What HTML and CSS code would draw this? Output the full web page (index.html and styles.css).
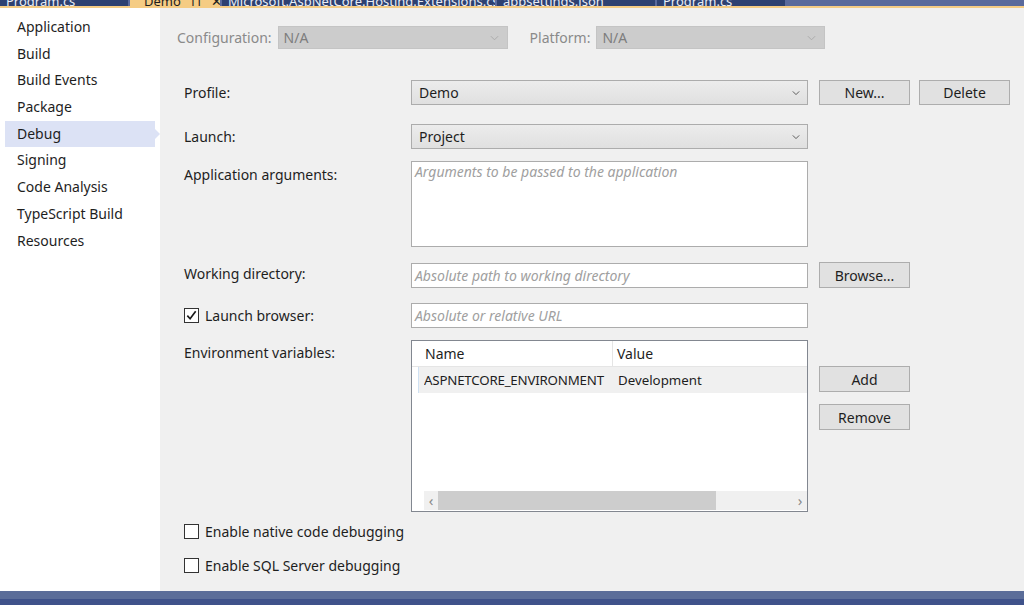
FILE: index.html
```html
<!DOCTYPE html>
<html>
<head>
<meta charset="utf-8">
<link rel="stylesheet" href="styles.css">
</head>
<body>
<div class="tabstrip">
  <div class="tab t1"><span>Program.cs</span></div>
  <div class="tab active t2"><span>Demo</span><span class="pin">⊓</span><span class="x">✕</span></div>
  <div class="tab t3"><span>Microsoft.AspNetCore.Hosting.Extensions.cs</span></div>
  <div class="tab t4"><span>appsettings.json</span></div>
  <div class="tab t5"><span>Program.cs</span></div>
  <div class="tabfill"></div>
</div>
<div class="accent"></div>
<div class="window">
  <nav class="nav">
    <div class="nav-item">Application</div>
    <div class="nav-item">Build</div>
    <div class="nav-item">Build Events</div>
    <div class="nav-item">Package</div>
    <div class="nav-item selected">Debug</div>
    <div class="nav-item">Signing</div>
    <div class="nav-item">Code Analysis</div>
    <div class="nav-item">TypeScript Build</div>
    <div class="nav-item">Resources</div>
  </nav>
  <main class="main">
    <div class="configbar">
      <span class="cfg-label">Configuration:</span>
      <div class="cfg-select cfg-wide"><span>N/A</span><svg class="chev" viewBox="0 0 10 6" width="9" height="6"><path d="M1 1l4 4 4-4" fill="none" stroke="#a8a8a8" stroke-width="1"/></svg></div>
      <span class="cfg-label cfg-plat">Platform:</span>
      <div class="cfg-select cfg-narrow"><span>N/A</span><svg class="chev" viewBox="0 0 10 6" width="9" height="6"><path d="M1 1l4 4 4-4" fill="none" stroke="#a8a8a8" stroke-width="1"/></svg></div>
    </div>
    <div class="form">
      <div class="row r-profile">
        <label class="lbl">Profile:</label>
        <div class="select"><span>Demo</span><svg class="chev" viewBox="0 0 10 6" width="8" height="6"><path d="M1 1l4 4 4-4" fill="none" stroke="#555" stroke-width="1.2"/></svg></div>
        <button class="btn">New...</button>
        <button class="btn">Delete</button>
      </div>
      <div class="row r-launch">
        <label class="lbl">Launch:</label>
        <div class="select"><span>Project</span><svg class="chev" viewBox="0 0 10 6" width="8" height="6"><path d="M1 1l4 4 4-4" fill="none" stroke="#555" stroke-width="1.2"/></svg></div>
      </div>
      <div class="row r-args">
        <label class="lbl lbl-top">Application arguments:</label>
        <div class="textarea ph">Arguments to be passed to the application</div>
      </div>
      <div class="row r-work">
        <label class="lbl">Working directory:</label>
        <div class="input ph">Absolute path to working directory</div>
        <button class="btn btn-browse">Browse...</button>
      </div>
      <div class="row r-browser">
        <label class="lbl chk-lbl"><span class="chk checked"><svg viewBox="0 0 14 14" width="13" height="13"><path d="M2.5 7.2l3 3.3 6-8" fill="none" stroke="#1a1a1a" stroke-width="1.8"/></svg></span>Launch browser:</label>
        <div class="input ph">Absolute or relative URL</div>
      </div>
      <div class="row r-env">
        <label class="lbl lbl-top">Environment variables:</label>
        <div class="grid">
          <div class="grid-head">
            <div class="gh-stub"></div>
            <div class="gh-name">Name</div>
            <div class="gh-value">Value</div>
          </div>
          <div class="grid-row">
            <div class="gr-stub"></div>
            <div class="gr-name">ASPNETCORE_ENVIRONMENT</div>
            <div class="gr-value">Development</div>
          </div>
          <div class="grid-body"></div>
          <div class="hscroll">
            <span class="arr">‹</span>
            <div class="track"><div class="thumb"></div></div>
            <span class="arr">›</span>
          </div>
        </div>
        <div class="env-btns">
          <button class="btn">Add</button>
          <button class="btn">Remove</button>
        </div>
      </div>
      <div class="checks">
        <label class="check-line"><span class="chk"></span>Enable native code debugging</label>
        <label class="check-line"><span class="chk"></span>Enable SQL Server debugging</label>
      </div>
    </div>
  </main>
</div>
<div class="statusbar"></div>
</body>
</html>
```
FILE: styles.css
```css
* { box-sizing: border-box; }
html, body { margin: 0; padding: 0; }
body {
  width: 1024px;
  height: 605px;
  overflow: hidden;
  font-family: "Noto Sans", "Open Sans", sans-serif;
  font-size: 14px;
  color: #1e1e1e;
  background: #f0f0f0;
  display: flex;
  flex-direction: column;
}
.tabstrip {
  height: 6px;
  display: flex;
  background: #5a6a9c;
  overflow: hidden;
}
.tab {
  height: 6px;
  background: #2e4171;
  color: #e8ecf5;
  font-size: 13px;
  line-height: 6px;
  margin-right: 2px;
  padding-left: 6px;
  white-space: nowrap;
  overflow: hidden;
  display: flex;
  align-items: flex-end;
}
.tab span { position: relative; top: -2px; }
.t1 { width: 128px; }
.t2 { width: 90px; background: #f5cc84; color: #1e1e1e; padding-left: 14px; gap: 10px; }
.t3 { width: 273px; }
.t4 { width: 158px; }
.t5 { width: 128px; margin-right: 0; }
.tabfill { flex: 1; }
.accent { height: 2px; background: #f5cc84; }
.window {
  flex: 1;
  display: flex;
  min-height: 0;
}
.nav {
  width: 160px;
  background: #ffffff;
  padding-top: 6px;
  padding-left: 5px;
}
.nav-item {
  height: 26.7px;
  line-height: 26px;
  padding-left: 12px;
  width: 150px;
  position: relative;
}
.nav-item.selected { background: #dce2f5; }
.nav-item.selected::after {
  content: "";
  position: absolute;
  right: -5px;
  top: 8px;
  border-left: 5px solid #dce2f5;
  border-top: 5px solid transparent;
  border-bottom: 5px solid transparent;
}
.main {
  flex: 1;
  background: #f0f0f0;
  padding-left: 17px;
}
.configbar {
  display: flex;
  align-items: center;
  height: 23px;
  margin-top: 18px;
  color: #8a8a8a;
}
.cfg-label { margin-right: 6px; }
.cfg-plat { margin-left: 22px; }
.cfg-select {
  height: 23px;
  background: #cccccc;
  border: 1px solid #c4c4c4;
  display: flex;
  align-items: center;
  justify-content: space-between;
  padding: 0 8px 0 5px;
  color: #7d7d7d;
}
.cfg-wide { width: 230px; }
.cfg-narrow { width: 229px; }
.form {
  padding-left: 7px;
  margin-top: 31px;
}
.row {
  display: flex;
  align-items: center;
}
.lbl {
  width: 227px;
  flex: none;
}
.lbl-top { align-self: flex-start; }
.select {
  width: 397px;
  height: 25px;
  border: 1px solid #acacac;
  background: linear-gradient(#ececec, #e0e0e0);
  display: flex;
  align-items: center;
  justify-content: space-between;
  padding: 0 7px 0 7px;
}
.btn {
  font-family: inherit;
  font-size: 14px;
  color: #1e1e1e;
  width: 91px;
  height: 25px;
  background: #e1e1e1;
  border: 1px solid #adadad;
  padding: 0;
  margin-left: 11px;
}
.btn + .btn { margin-left: 9px; }
.r-launch { margin-top: 19px; }
.r-args { margin-top: 12px; align-items: flex-start; }
.r-args .lbl { margin-top: 4px; }
.textarea {
  width: 397px;
  height: 86px;
  background: #fff;
  border: 1px solid #acacac;
  padding: 0 3px;
}
.ph { font-style: italic; color: #a0a0a0; }
.r-work { margin-top: 15px; }
.r-work .lbl { margin-top: -3px; }
.input {
  width: 397px;
  height: 25px;
  background: #fff;
  border: 1px solid #acacac;
  line-height: 23px;
  padding: 0 3px;
}
.btn-browse { height: 26px; }
.r-browser { margin-top: 15px; }
.chk-lbl { display: flex; align-items: center; }
.chk {
  width: 15px;
  height: 15px;
  border: 1px solid #333;
  background: #fff;
  display: inline-flex;
  align-items: center;
  justify-content: center;
  margin-right: 6px;
  flex: none;
}
.r-env { margin-top: 12px; align-items: flex-start; }
.r-env .lbl { margin-top: 3px; }
.grid {
  width: 397px;
  height: 172px;
  background: #fff;
  border: 1px solid #828790;
  display: flex;
  flex-direction: column;
}
.grid-head, .grid-row {
  display: flex;
  height: 26px;
  align-items: center;
  flex: none;
}
.grid-head { border-bottom: 1px solid #e5e5e5; }
.gh-stub { width: 12px; height: 100%; }
.gh-name { width: 189px; height: 100%; line-height: 26px; padding-left: 1px; border-right: 1px solid #e5e5e5; }
.gh-value { padding-left: 4px; }
.grid-row { background: #f0f0f0; font-size: 13.3px; }
.gr-stub { width: 7px; height: 100%; background: #fff; border-right: 1px solid #cfe1f3; margin-right: 5px; }
.gr-name { width: 189px; padding-left: 0; white-space: nowrap; overflow: hidden; letter-spacing: -0.2px; }
.gr-value { padding-left: 5px; }
.grid-body { flex: 1; }
.hscroll {
  height: 19px;
  margin-left: 12px;
  margin-bottom: 1px;
  background: #f0f0f0;
  display: flex;
  align-items: center;
  flex: none;
}
.arr { width: 14px; text-align: center; color: #8a8a8a; font-size: 15px; line-height: 17px; }
.track { flex: 1; height: 100%; }
.thumb { width: 278px; height: 100%; background: #cdcdcd; }
.env-btns {
  display: flex;
  flex-direction: column;
  margin-top: 26px;
  gap: 12px;
}
.env-btns .btn { margin-left: 11px; height: 26px; }
.checks {
  margin-top: 11px;
  display: flex;
  flex-direction: column;
  gap: 18px;
}
.check-line { display: flex; align-items: center; height: 16px; }
.statusbar {
  height: 14px;
  background: linear-gradient(#5b6d99 0, #5b6d99 8px, #3f528a 8px);
  flex: none;
}
```
